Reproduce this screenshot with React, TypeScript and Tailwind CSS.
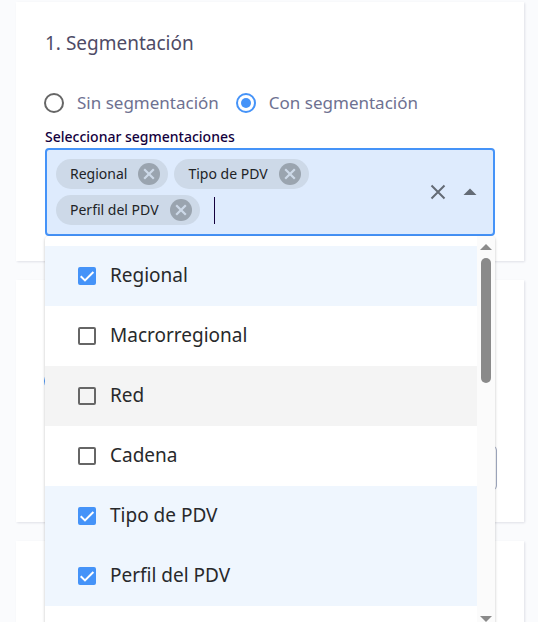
import React, { useState } from 'react';

const OPTIONS = ['Regional', 'Macrorregional', 'Red', 'Cadena', 'Tipo de PDV', 'Perfil del PDV'];

interface RadioProps {
    name: string;
    label?: string;
    checked: boolean;
    onChange: () => void;
}

const Radio: React.FC<RadioProps> = ({ name, label, checked, onChange }) => (
    <label className="flex items-center gap-[13px] text-[17px] leading-6 text-[#6e7191]">
        <span className="grid size-5 shrink-0 place-items-center">
            <input
                type="radio"
                name={name}
                aria-label={label ?? 'Opción'}
                checked={checked}
                onChange={onChange}
                className="peer col-start-1 row-start-1 size-5 appearance-none rounded-full border-2 border-[#666666] checked:border-[#4593f8]"
            />
            <span className="pointer-events-none col-start-1 row-start-1 hidden size-[10px] rounded-full bg-[#4593f8] peer-checked:block" />
        </span>
        {label}
    </label>
);

const Chip: React.FC<{ label: string; onRemove: () => void }> = ({ label, onRemove }) => (
    <span className="flex h-[30px] items-center gap-[10px] rounded-full bg-[#cdd9e8] pr-[7px] pl-[14px] text-sm text-[#212326]">
        {label}
        <button type="button" aria-label={`Quitar ${label}`} onClick={onRemove} className="size-6">
            <svg viewBox="0 0 24 24" className="size-6" aria-hidden="true">
                <circle cx="12" cy="12" r="11" fill="#9aa4af" />
                <path d="M7.2 7.2l9.6 9.6M16.8 7.2l-9.6 9.6" stroke="#cdd9e8" strokeWidth="2.2" />
            </svg>
        </button>
    </span>
);

interface OptionRowProps {
    label: string;
    checked: boolean;
    active: boolean;
    onToggle: () => void;
}

const OptionRow: React.FC<OptionRowProps> = ({ label, checked, active, onToggle }) => (
    <label
        className={`flex h-[60px] shrink-0 items-center gap-[14px] pl-[33px] text-[19px] leading-7 text-[#28292b] ${
            checked ? 'bg-[#eff6fe]' : active ? 'bg-[#f4f4f4]' : 'bg-white'
        }`}
    >
        <span className="grid size-[18px] place-items-center">
            <input
                type="checkbox"
                checked={checked}
                onChange={onToggle}
                className="peer col-start-1 row-start-1 size-[18px] appearance-none rounded-[2px] border-2 border-[#666666] checked:border-[#4593f8] checked:bg-[#4593f8]"
            />
            <svg
                viewBox="0 0 18 18"
                className="pointer-events-none col-start-1 row-start-1 hidden size-[18px] peer-checked:block"
                aria-hidden="true"
            >
                <path d="M2.7 9.2L7 13.4L15.4 5" fill="none" stroke="#ffffff" strokeWidth="2" />
            </svg>
        </span>
        <span className="pb-[2px]">{label}</span>
    </label>
);

const Card: React.FC<{ title?: string; children?: React.ReactNode }> = ({ title, children }) => (
    <section className="bg-white px-[29px] pt-[27px] pb-[25px] shadow-[1px_1px_2px_rgba(40,40,80,0.12)]">
        {title && <h2 className="text-[19px] leading-7 text-[#4e4b66]">{title}</h2>}
        {children}
    </section>
);

export default function App() {
    const [segmented, setSegmented] = useState(true);
    const [selected, setSelected] = useState(['Regional', 'Tipo de PDV', 'Perfil del PDV']);

    const toggle = (option: string) =>
        setSelected((prev) => (prev.includes(option) ? prev.filter((o) => o !== option) : [...prev, option]));

    return (
        <main className="flex h-screen flex-col gap-[19px] overflow-hidden bg-[#fafbfd] pt-[2px] pr-[14px] pl-4 font-['Noto_Sans','Open_Sans',sans-serif]">
            <Card title="1. Segmentación">
                <div className="-ml-px mt-[34px] flex gap-[17px]">
                    <Radio name="segmentation" label="Sin segmentación" checked={!segmented} onChange={() => setSegmented(false)} />
                    <Radio name="segmentation" label="Con segmentación" checked={segmented} onChange={() => setSegmented(true)} />
                </div>
                <label htmlFor="segments" className="mt-3 block text-sm leading-5 font-medium text-[#14003d]">
                    Seleccionar segmentaciones
                </label>

                <div className="relative mt-px">
                    <div className="flex items-center rounded border-2 border-[#4593f8] bg-[#deebfd] py-[9px] pr-[11px] pl-[9px]">
                        <div className="flex min-w-0 flex-1 flex-wrap items-center gap-[6px] pr-16">
                            {selected.map((item) => (
                                <Chip key={item} label={item} onRemove={() => toggle(item)} />
                            ))}
                            <input
                                id="segments"
                                type="text"
                                className="ml-2 h-[27px] w-24 border-l border-[#14003d] bg-transparent text-sm outline-none"
                            />
                        </div>
                        <button type="button" aria-label="Limpiar" onClick={() => setSelected([])} className="mr-2">
                            <svg viewBox="0 0 24 24" className="size-6" aria-hidden="true">
                                <path d="M5.5 5.5l13 13M18.5 5.5l-13 13" stroke="#646b75" strokeWidth="2" />
                            </svg>
                        </button>
                        <button type="button" aria-label="Cerrar">
                            <svg viewBox="0 0 24 24" className="size-6" aria-hidden="true">
                                <path d="M5.5 15L12 8.5L18.5 15z" fill="#646b75" />
                            </svg>
                        </button>
                    </div>

                    <div className="absolute inset-x-0 top-full z-10 flex rounded bg-white shadow-[0_1px_3px_rgba(0,0,0,0.25)]">
                        <div className="flex flex-1 flex-col pt-[10px] pb-5">
                            {OPTIONS.map((option) => (
                                <OptionRow
                                    key={option}
                                    label={option}
                                    checked={selected.includes(option)}
                                    active={option === 'Red'}
                                    onToggle={() => toggle(option)}
                                />
                            ))}
                        </div>
                        <div className="flex w-[18px] flex-col items-center rounded-r bg-[#fbfbfb] pt-2">
                            <svg viewBox="0 0 12 6" className="h-[6px] w-3" aria-hidden="true">
                                <path d="M0 6L6 0L12 6z" fill="#8a8a8a" />
                            </svg>
                            <div className="mt-2 h-[125px] w-[10px] rounded-full bg-[#8a8a8a]" />
                            <svg viewBox="0 0 12 6" className="mt-auto mb-1 h-[6px] w-3" aria-hidden="true">
                                <path d="M0 0L6 6L12 0z" fill="#8a8a8a" />
                            </svg>
                        </div>
                    </div>
                </div>
            </Card>

            <Card>
                <div className="-ml-px mt-16">
                    <Radio name="detail" checked onChange={() => undefined} />
                </div>
                <input
                    type="text"
                    aria-label="Detalle"
                    className="mt-[55px] mb-[7px] block h-[44px] w-[calc(100%+2px)] rounded border border-[#a0a9c0]"
                />
            </Card>

            <Card>
                <div className="h-40" />
            </Card>
        </main>
    );
}
